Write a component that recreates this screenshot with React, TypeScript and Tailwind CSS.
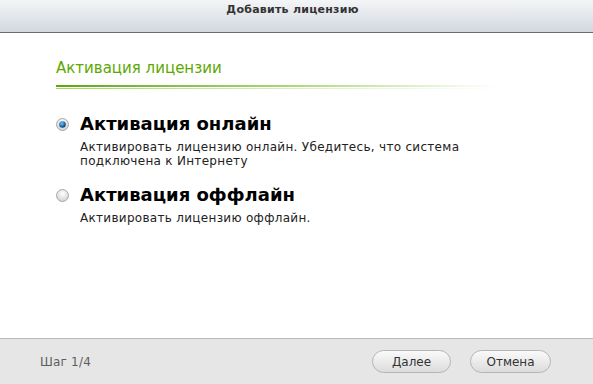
import { useState } from "react";

function Radio({ checked }: { checked: boolean }) {
  return (
    <svg width="13" height="13" viewBox="0 0 13 13" className="shrink-0">
      <defs>
        <radialGradient id="rbg" cx="50%" cy="35%" r="60%">
          <stop offset="0%" stopColor="#ffffff" />
          <stop offset="100%" stopColor="#d4d4d4" />
        </radialGradient>
        <radialGradient id="rdot" cx="40%" cy="35%" r="65%">
          <stop offset="0%" stopColor="#7fc4f0" />
          <stop offset="60%" stopColor="#1f74b8" />
          <stop offset="100%" stopColor="#0d3d6b" />
        </radialGradient>
      </defs>
      <circle cx="6.5" cy="6.5" r="6" fill="url(#rbg)" stroke="#a9a9a9" strokeWidth="1" />
      {checked && <circle cx="6.5" cy="6.5" r="3.3" fill="url(#rdot)" />}
    </svg>
  );
}

function Option({
  checked,
  title,
  text,
  onClick,
}: {
  checked: boolean;
  title: string;
  text: string;
  onClick: () => void;
}) {
  return (
    <div className="flex flex-col cursor-pointer" onClick={onClick}>
      <div className="flex items-center gap-[11px] pl-[56px]">
        <Radio checked={checked} />
        <span className="text-[18px] font-bold leading-[22px] text-black">{title}</span>
      </div>
      <p className="pl-[80px] pr-[100px] mt-[5px] text-[12px] tracking-[0.3px] leading-[14px] text-[#222]">{text}</p>
    </div>
  );
}

export default function App() {
  const [mode, setMode] = useState("online");

  return (
    <div className="w-[593px] h-[384px] flex flex-col bg-white" style={{ fontFamily: '"DejaVu Sans", Verdana, sans-serif' }}>
      <div className="h-[33px] shrink-0 flex items-start justify-center pt-[3px] pr-[8px] bg-gradient-to-b from-[#f4f5f7] to-[#d3d8de] border-b border-[#6c6c6c]">
        <span className="text-[11px] font-bold tracking-[0.25px] leading-[14px] text-[#333]">Добавить лицензию</span>
      </div>

      <div className="flex-1 flex flex-col">
        <div className="pl-[56px] pt-[26px]">
          <div className="text-[15px] leading-[18px] text-[#5ca800]">Активация лицензии</div>
          <div className="mt-[8px] w-[441px] h-[2px] bg-gradient-to-r from-[#5ca800] via-[#a9d46e] to-white" />
          <div className="mt-[1px] w-[441px] h-[1px] bg-gradient-to-r from-[#a8d36b] via-[#d8ebc0] to-white" />
        </div>

        <div className="mt-[24px] flex flex-col gap-[16px]">
          <Option
            checked={mode === "online"}
            title="Активация онлайн"
            text="Активировать лицензию онлайн. Убедитесь, что система подключена к Интернету"
            onClick={() => setMode("online")}
          />
          <Option
            checked={mode === "offline"}
            title="Активация оффлайн"
            text="Активировать лицензию оффлайн."
            onClick={() => setMode("offline")}
          />
        </div>
      </div>

      <div className="h-[46px] shrink-0 flex items-center bg-[#e6e6e6] border-t border-[#b9b9b9] pl-[40px] pr-[42px]">
        <span className="text-[12px] tracking-[0.2px] text-[#5e5e5e]">Шаг 1/4</span>
        <div className="ml-auto flex gap-[19px]">
          <button className="w-[79px] h-[23px] rounded-full border border-[#b5b5b5] bg-gradient-to-b from-[#fafafa] to-[#dcdcdc] text-[12px] text-[#333]">
            Далее
          </button>
          <button className="w-[81px] h-[23px] rounded-full border border-[#b5b5b5] bg-gradient-to-b from-[#fafafa] to-[#dcdcdc] text-[12px] text-[#333]">
            Отмена
          </button>
        </div>
      </div>
    </div>
  );
}
